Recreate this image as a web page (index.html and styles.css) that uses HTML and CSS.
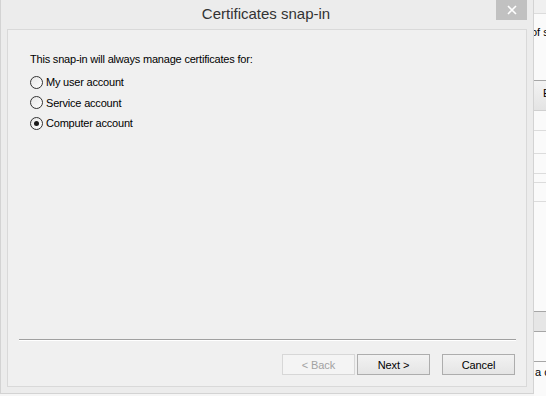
FILE: index.html
```html
<!DOCTYPE html>
<html lang="en">
  <head>
    <meta charset="UTF-8" />
    <meta name="viewport" content="width=device-width, initial-scale=1.0" />
    <title>Certificates snap-in</title>
    <link rel="stylesheet" href="styles.css">
  </head>

  <body>
    <div class="screen">
      <div class="window">
        <div class="titlebar">
          <div class="title">Certificates snap-in</div>
          <div class="close">
            <svg width="10" height="10" viewBox="0 0 10 10">
              <path d="M1 1 L9 9 M9 1 L1 9" stroke="#fff" stroke-width="1.6" fill="none" />
            </svg>
          </div>
        </div>

        <div class="panel">
          <div class="content">
            <p class="prompt">This snap-in will always manage certificates for:</p>
            <label class="radio"><span class="circle"></span>My user account</label>
            <label class="radio"><span class="circle"></span>Service account</label>
            <label class="radio"><span class="circle checked"></span>Computer account</label>
          </div>

          <div class="separator"></div>

          <div class="buttons">
            <button class="btn" disabled>&lt; Back</button>
            <button class="btn">Next &gt;</button>
            <button class="btn cancel">Cancel</button>
          </div>
        </div>
      </div>

      <!-- window behind the dialog -->
      <div class="behind">
        <div class="row r-top"></div>
        <div class="row r-text"><span class="peek">of s</span></div>
        <div class="row r-button"><span class="peek">E</span></div>
        <div class="row r-20"></div>
        <div class="row r-23"></div>
        <div class="row r-20"></div>
        <div class="row r-9"></div>
        <div class="row r-19"></div>
        <div class="row r-110"></div>
        <div class="row r-band"></div>
        <div class="row r-30"></div>
        <div class="row r-last"><span class="peek">a c</span></div>
      </div>
    </div>
  </body>
</html>
```

FILE: styles.css
```css
body {
  margin: 0;
  width: 546px;
  height: 396px;
  overflow: hidden;
  background-color: #f6f6f6;
  font-family: "Liberation Sans", Arial, sans-serif;
  font-size: 11px;
  color: #000;
}

.screen {
  display: flex;
  height: 396px;
}

.window {
  width: 534px;
  height: 394px;
  box-sizing: border-box;
  background-color: #ececec;
  border: 1px solid #d3d3d3;
  border-top: none;
  display: flex;
  flex-direction: column;
  flex-shrink: 0;
}

.titlebar {
  height: 29px;
  display: flex;
  align-items: flex-start;
}

.title {
  flex: 1;
  text-align: center;
  padding-left: 35px;
  padding-top: 3px;
  font-family: "Liberation Sans", Arial, sans-serif;
  font-size: 15px;
  line-height: 22px;
  color: #333;
}

.close {
  width: 31px;
  height: 20px;
  margin-right: 6px;
  background-color: #c1c1c1;
  display: flex;
  align-items: center;
  justify-content: center;
}

.panel {
  margin: 0 6px;
  height: 358px;
  box-sizing: border-box;
  border: 1px solid #d9d9d9;
  background-color: #f0f0f0;
  display: flex;
  flex-direction: column;
}

.content {
  flex: 1;
  padding: 23px 22px 0;
  letter-spacing: -0.2px;
}

.prompt {
  margin: 0 0 6px;
  line-height: 13px;
}

.radio {
  display: flex;
  align-items: center;
  height: 20.5px;
}

.circle {
  width: 13px;
  height: 13px;
  box-sizing: border-box;
  border: 1px solid #333;
  border-radius: 50%;
  background: linear-gradient(135deg, #e6e6e6, #fff);
  margin-right: 3px;
  display: flex;
  align-items: center;
  justify-content: center;
}

.circle.checked::after {
  content: "";
  width: 5px;
  height: 5px;
  border-radius: 50%;
  background-color: #1a1a1a;
}

.separator {
  margin: 0 10px 0 11px;
  border-top: 1px solid #a0a0a0;
  border-bottom: 1px solid #fff;
}

.buttons {
  display: flex;
  justify-content: flex-end;
  margin-top: 13px;
  padding: 0 11px 11px 0;
  gap: 2px;
}

.btn {
  width: 73px;
  height: 21px;
  box-sizing: border-box;
  border: 1px solid #adadad;
  background: linear-gradient(#f2f2f2, #e5e5e5);
  font-family: "Liberation Sans", Arial, sans-serif;
  font-size: 11px;
  letter-spacing: -0.1px;
  color: #000;
  padding: 0;
}

.btn:disabled {
  border-color: #d7d7d7;
  background: #f4f4f4;
  color: #a2a2a2;
}

.cancel {
  margin-left: 10px;
}

.behind {
  flex: 1;
  display: flex;
  flex-direction: column;
  background-color: #fafafa;
  overflow: hidden;
}

.row {
  flex-shrink: 0;
  border-bottom: 1px solid #dcdcdc;
  white-space: nowrap;
}

.peek {
  display: block;
  margin-left: -3px;
  font-size: 11px;
  line-height: 13px;
}

.r-top {
  height: 13px;
  background-color: #f0f0f0;
}

.r-text {
  height: 66px;
  border-bottom: 1px solid #a6a6a6;
}

.r-text .peek {
  margin-top: 12px;
}

.r-button {
  height: 29px;
  background: linear-gradient(#f3f3f3, #e4e4e4);
  border-bottom: 1px solid #d0d0d0;
}

.r-button .peek {
  margin-top: 6px;
  margin-left: 9px;
}

.r-20 {
  height: 19px;
}

.r-23 {
  height: 22px;
}

.r-9 {
  height: 8px;
}

.r-19 {
  height: 18px;
}

.r-110 {
  height: 109px;
  border-bottom: 1px solid #a6a6a6;
}

.r-band {
  height: 19px;
  background-color: #e6e6e6;
  border-bottom: 1px solid #a6a6a6;
}

.r-30 {
  height: 29px;
  border-bottom: 1px solid #a6a6a6;
}

.r-last {
  flex: 1;
  border-bottom: none;
}

.r-last .peek {
  margin-top: 4px;
  margin-left: 1px;
}
```
